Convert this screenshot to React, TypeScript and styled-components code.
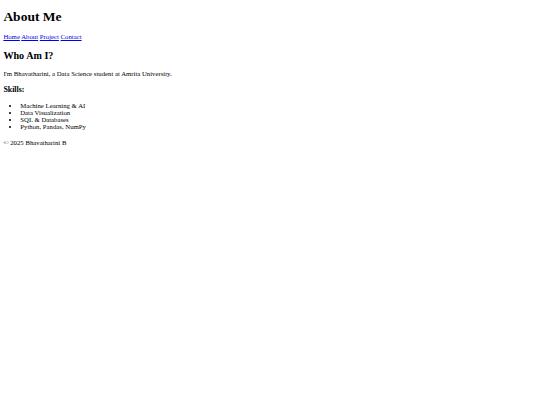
import styled, { createGlobalStyle } from "styled-components";

// the reference is a 1280-wide page shown at 540px, so every default is scaled by 0.421875
const GlobalStyle = createGlobalStyle`
  html, body {
    background: #ffffff;
  }
  body {
    margin: 3.375px;
    font-family: "Liberation Serif", "Times New Roman", serif;
    font-size: 6.75px;
    color: #000000;
  }
`;

const Header = styled.header``;

const Title = styled.h1`
  font-size: 13.5px;
  font-weight: bold;
  margin: 6px 0 8px;
`;

const Nav = styled.nav`
  display: block;
`;

const NavLink = styled.a`
  color: #0000ee;
  text-decoration: underline;
`;

const Section = styled.section``;

const Heading = styled.h2`
  font-size: 10.125px;
  font-weight: bold;
  margin: 9.4px 0;
`;

const SubHeading = styled.h3`
  font-size: 7.898px;
  font-weight: bold;
  margin: 7.898px 0 8.4px;
`;

const Para = styled.p`
  margin: 6.75px 0;
`;

const SkillList = styled.ul`
  margin: 6.75px 0 8.25px;
  padding-left: 16.875px;
  list-style: disc;
`;

const Footer = styled.footer``;

const links = ["Home", "About", "Project", "Contact"];
const skills = [
  "Machine Learning & AI",
  "Data Visualization",
  "SQL & Databases",
  "Python, Pandas, NumPy",
];

const App = () => {
  return (
    <>
      <GlobalStyle />
      <Header>
        <Title>About Me</Title>
        <Nav>
          {links.map((l, i) => (
            <span key={l}>
              <NavLink href="#">{l}</NavLink>
              {i < links.length - 1 ? " " : ""}
            </span>
          ))}
        </Nav>
      </Header>
      <Section>
        <Heading>Who Am I?</Heading>
        <Para>I'm Bhavatharini, a Data Science student at Amrita University.</Para>
        <SubHeading>Skills:</SubHeading>
        <SkillList>
          {skills.map((s) => (
            <li key={s}>{s}</li>
          ))}
        </SkillList>
      </Section>
      <Footer>
        <Para>&copy; 2025 Bhavatharini B</Para>
      </Footer>
    </>
  );
};

export default App;
